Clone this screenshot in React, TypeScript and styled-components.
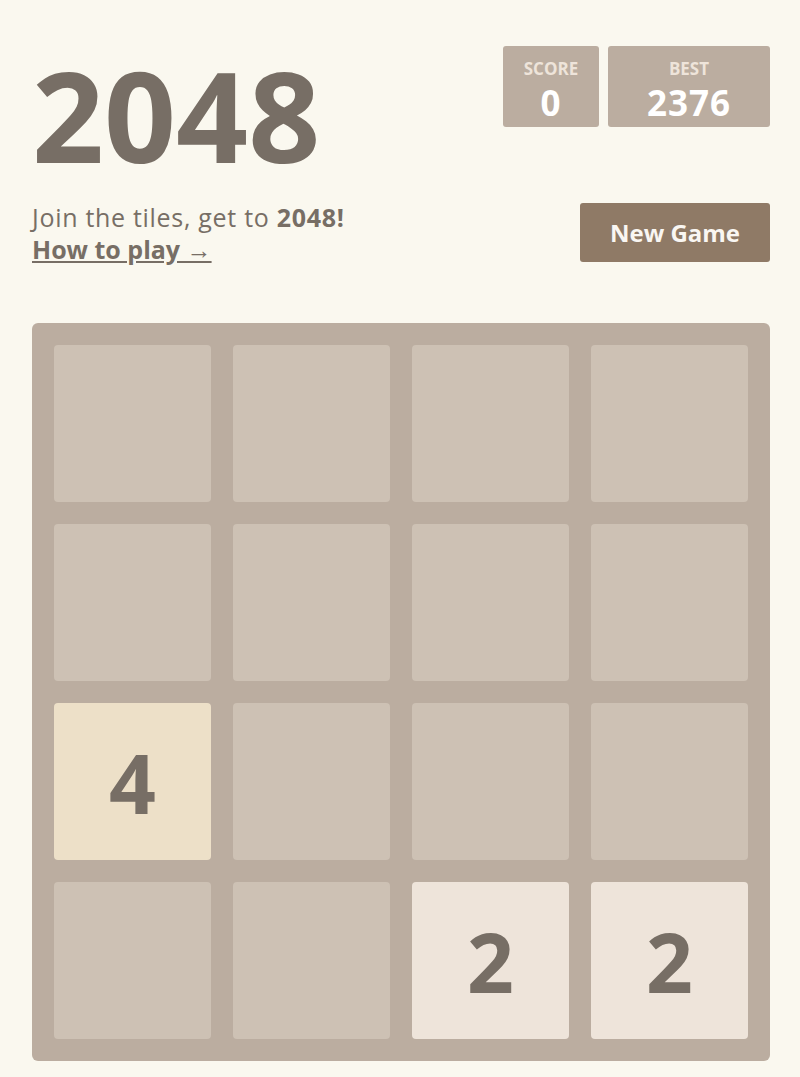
import styled, { createGlobalStyle } from 'styled-components';

const GlobalStyle = createGlobalStyle`
  html, body {
    margin: 0;
    padding: 0;
    background: #faf8ef;
    font-family: "Open Sans", "Noto Sans", Arial, sans-serif;
    color: #776e65;
  }
`;

const Page = styled.div`
  width: 738px;
  padding: 46px 30px 0 32px;
`;

const Heading = styled.div`
  display: flex;
  justify-content: space-between;
  align-items: flex-start;
`;

const Title = styled.h1`
  margin: 7px 0 0 0;
  font-size: 126px;
  font-weight: 700;
  line-height: 122px;
`;

const Scores = styled.div`
  display: flex;
  gap: 9px;
`;

const ScoreBox = styled.div<{ $w: number }>`
  width: ${({ $w }) => $w}px;
  height: 81px;
  background: #bbada0;
  border-radius: 3px;
  display: flex;
  flex-direction: column;
  align-items: center;
  padding-top: 11px;
  box-sizing: border-box;
  overflow: visible;
`;

const ScoreLabel = styled.span`
  font-size: 17px;
  font-weight: 700;
  color: #eee4da;
  line-height: 23px;
`;

const ScoreValue = styled.span`
  font-size: 35px;
  font-weight: 700;
  color: #fff;
  line-height: 48px;
  margin-top: -1px;
  letter-spacing: 1px;
`;

const Intro = styled.div`
  display: flex;
  justify-content: space-between;
  align-items: flex-start;
  margin-top: 26px;
`;

const Text = styled.p`
  margin: 0;
  font-size: 25px;
  line-height: 32px;
  letter-spacing: 0.7px;
`;

const HowTo = styled.a`
  font-weight: 700;
  color: #776e65;
  text-decoration: underline;
  letter-spacing: 0;
`;

const NewGame = styled.button`
  width: 190px;
  height: 59px;
  margin-top: 2px;
  background: #8f7a66;
  color: #f9f6f2;
  border: none;
  border-radius: 3px;
  font-family: inherit;
  font-size: 24px;
  font-weight: 700;
`;

const Board = styled.div`
  margin-top: 58px;
  background: #bbada0;
  border-radius: 6px;
  padding: 22px;
  display: grid;
  grid-template-columns: repeat(4, 157px);
  grid-auto-rows: 157px;
  gap: 22px;
`;

const tileBg: Record<number, string> = {
  0: '#cdc1b4',
  2: '#eee4da',
  4: '#ede0c8',
};

const Tile = styled.div<{ $v: number }>`
  background: ${({ $v }) => tileBg[$v]};
  border-radius: 4px;
  display: flex;
  align-items: center;
  justify-content: center;
  font-size: 82px;
  font-weight: 700;
  color: #776e65;
`;

const grid = [
  [0, 0, 0, 0],
  [0, 0, 0, 0],
  [4, 0, 0, 0],
  [0, 0, 2, 2],
];

export default function App() {
  return (
    <>
      <GlobalStyle />
      <Page>
        <Heading>
          <Title>2048</Title>
          <Scores>
            <ScoreBox $w={96}>
              <ScoreLabel>SCORE</ScoreLabel>
              <ScoreValue>0</ScoreValue>
            </ScoreBox>
            <ScoreBox $w={162}>
              <ScoreLabel>BEST</ScoreLabel>
              <ScoreValue>2376</ScoreValue>
            </ScoreBox>
          </Scores>
        </Heading>
        <Intro>
          <Text>
            Join the tiles, get to <strong>2048!</strong>
            <br />
            <HowTo href="#">How to play →</HowTo>
          </Text>
          <NewGame>New Game</NewGame>
        </Intro>
        <Board>
          {grid.flat().map((v, i) => (
            <Tile key={i} $v={v}>
              {v > 0 ? v : ''}
            </Tile>
          ))}
        </Board>
      </Page>
    </>
  );
}
